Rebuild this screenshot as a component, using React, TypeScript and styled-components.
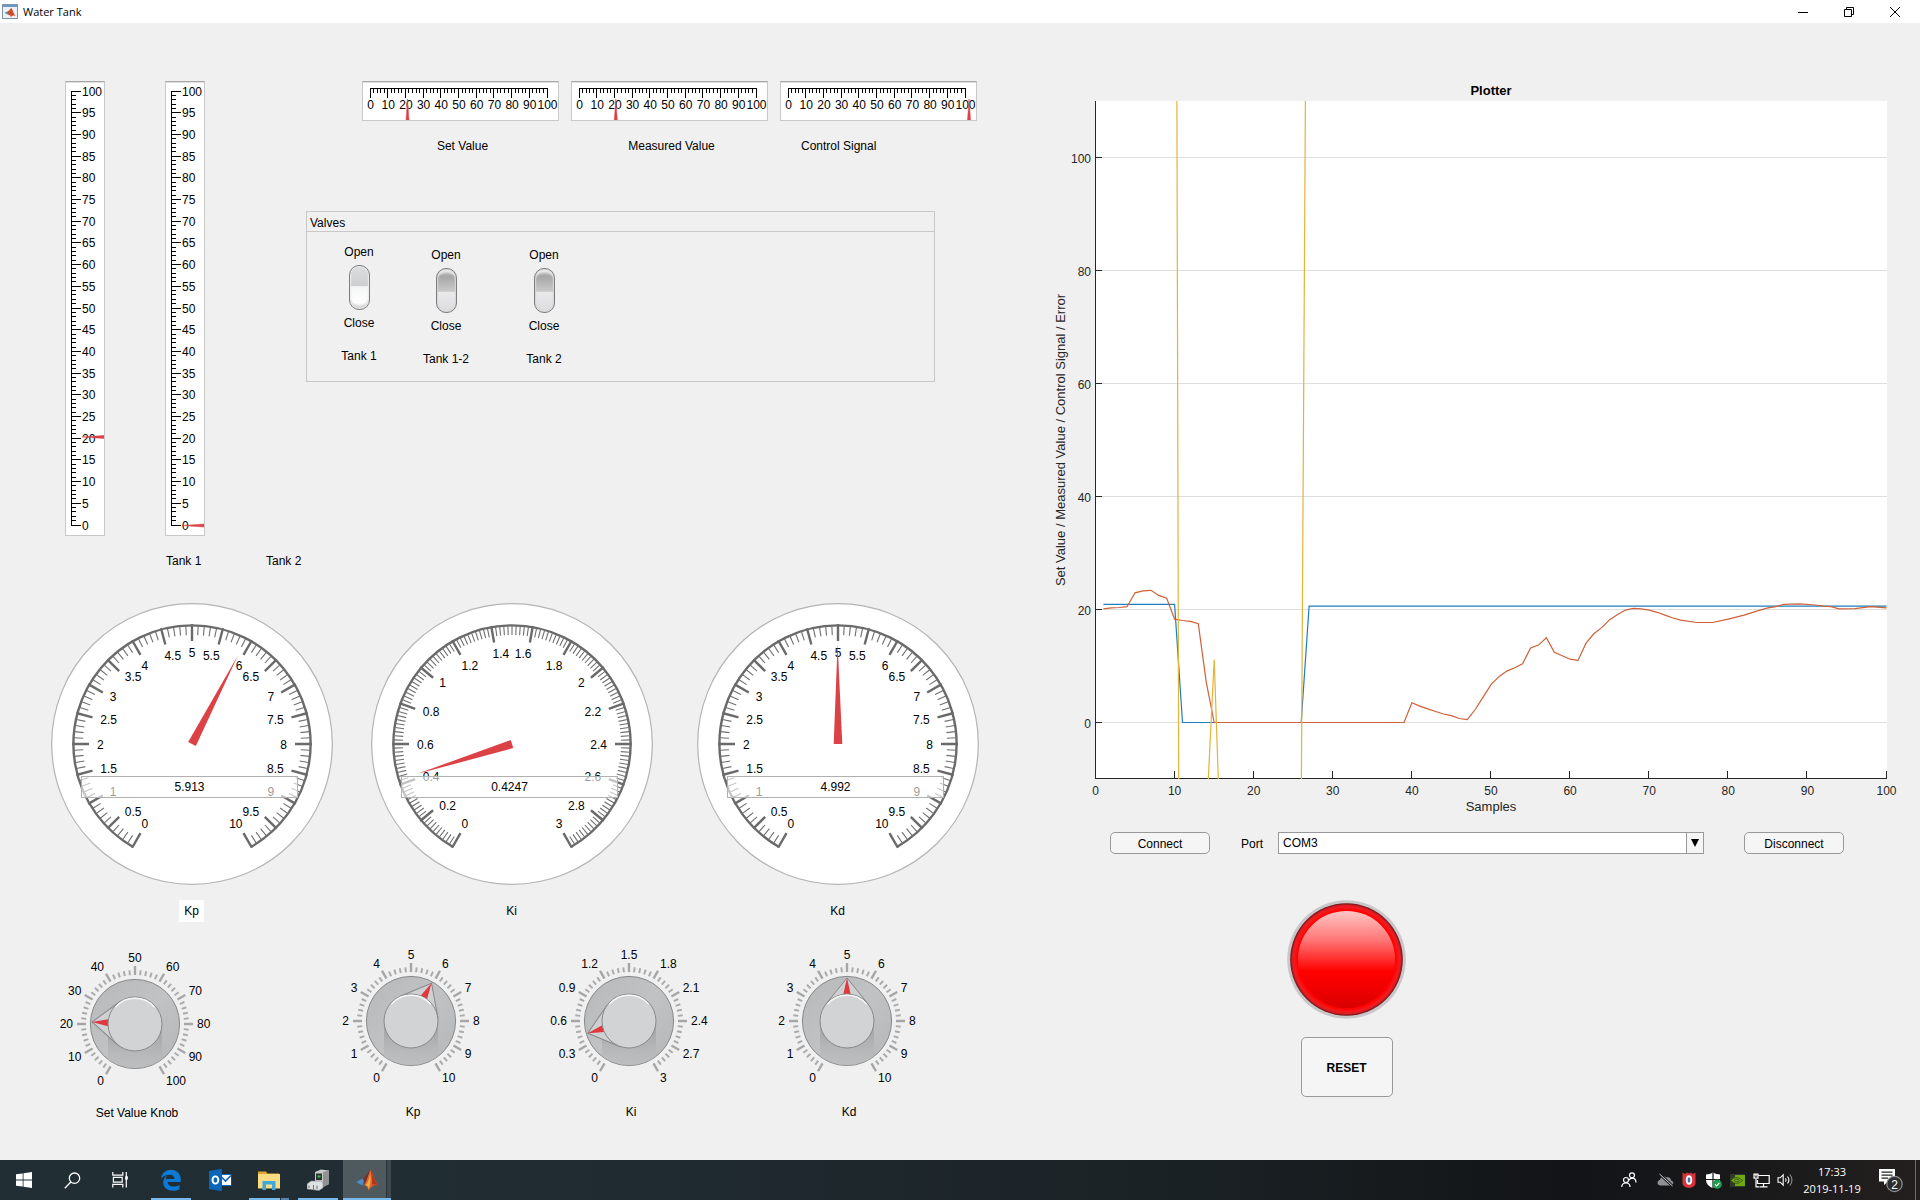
import React from "react";
import styled, { createGlobalStyle, css } from "styled-components";

const UI_FONT = '"Liberation Sans", Arial, sans-serif';
const SHELL_FONT = '"Open Sans", "Noto Sans", sans-serif';

const GlobalStyle = createGlobalStyle`
  *, *::before, *::after { box-sizing: border-box; }
  body { margin: 0; background: #f0f0f0; font: 12px/16px ${UI_FONT}; color: #000; }
  svg { display: block; }
  button, input, select { font: inherit; color: inherit; }
  figure, p, h1, h2, fieldset { margin: 0; }
`;

/* ---------- window frame ---------- */

const Window = styled.div`
  display: flex;
  flex-direction: column;
  min-height: 100vh;
`;

const TitleBar = styled.header`
  display: flex;
  align-items: center;
  height: 23px;
  padding: 0 2px;
  gap: 5px;
  background: #fff;
`;

const Title = styled.h1`
  flex: 1;
  font: 400 11px/16px ${SHELL_FONT};
`;

const CaptionButtons = styled.div`
  display: flex;
`;

const CaptionButton = styled.button`
  display: grid;
  place-items: center;
  width: 46px;
  height: 22px;
  padding: 0;
  border: 0;
  background: none;
`;

const Workspace = styled.main`
  display: flex;
  flex: 1;
  padding-top: 58px;
`;

const Instruments = styled.section`
  flex: none;
  width: 1050px;
`;

const PlotColumn = styled.section`
  flex: 1;
  min-width: 0;
`;

/* ---------- text on gauges ---------- */

const Num = styled.text<{ $bold?: boolean; $size?: number }>`
  font-family: ${UI_FONT};
  font-size: ${(p) => p.$size ?? 12}px;
  font-weight: ${(p) => (p.$bold ? 700 : 400)};
`;

/* ---------- top row ---------- */

const TopRow = styled.div`
  display: flex;
`;

const Tanks = styled.div`
  width: 306px;
  padding-left: 65px;
`;

const TankGauges = styled.div`
  display: flex;
  gap: 60px;
`;

const TankNames = styled.div`
  display: flex;
  margin: 17px 0 0 101px;

  span { flex: none; width: 100px; }
`;

const LinearFace = styled.div`
  flex: none;
  border: 1px solid #c8c8c8;
  border-top-color: #a8a8a8;
  background: #fff;
  box-shadow: inset 0 1px 0 #e0e0e0;
`;

const Meters = styled.div`
  display: flex;
  gap: 12px;
  padding-left: 56px;
`;

const MeterName = styled.figcaption<{ $left?: boolean }>`
  margin-top: 17px;
  padding-left: 4px;
  text-align: center;
  ${(p) =>
    p.$left &&
    css`
      padding-left: 21px;
      text-align: left;
    `}
`;

const Valves = styled.section`
  width: 629px;
  height: 171px;
  margin-top: 57px;
  border: 1px solid #c8c8c8;
`;

const PanelTitle = styled.h2`
  height: 20px;
  padding: 3px 3px 0;
  border-bottom: 1px solid #c8c8c8;
  font: 400 12px/16px ${UI_FONT};
`;

const ValveList = styled.div`
  display: flex;
  padding-left: 3px;
`;

const Valve = styled.div<{ $drop?: boolean; $width: number }>`
  display: flex;
  flex-direction: column;
  align-items: center;
  width: ${(p) => p.$width}px;
  padding-top: ${(p) => (p.$drop ? 15 : 12)}px;
`;

const RockerSwitch = styled.input`
  appearance: none;
  width: 21px;
  height: 45px;
  margin: 5px 0;
  border: 1px solid #7d7d7d;
  border-radius: 10px;
  background: linear-gradient(#dcdee0, #cdcfd1 46%, #f4f5f5 48%, #fff 85%, #dcdcdc);
  box-shadow: inset 0 0 1px 1px #ededed, inset 0 -3px 2px #d4d4d4;

  &:checked {
    background: linear-gradient(#e4e4e4, #a6a6a6 16%, #c9c9c9 52%, #e9e9eb 54%, #dcdcde);
    box-shadow: inset 0 0 1px 1px #d6d6d6, inset 0 3px 2px #ececec;
  }
`;

const ValveName = styled.label`
  margin-top: 17px;
`;

/* ---------- dials ---------- */

const Dials = styled.div`
  display: grid;
  grid-template-columns: 320px 326px 281px;
  padding: 34px 0 0 51px;
`;

const DialFigure = styled.figure`
  position: relative;
  display: flex;
  flex-direction: column;
  align-items: center;
  width: 281px;
`;

const Readout = styled.input`
  position: absolute;
  top: 173px;
  left: 30px;
  width: 217px;
  height: 22px;
  padding: 0;
  border: 1px solid #b0b0b0;
  background: rgba(255, 255, 255, 0.6);
  text-align: center;
`;

const DialName = styled.figcaption<{ $lit?: boolean }>`
  margin-top: 15px;
  padding: 3px 5px;
  background: ${(p) => (p.$lit ? "#fff" : "transparent")};
`;

/* ---------- knobs ---------- */

const Knobs = styled.div`
  display: flex;
  gap: 38px;
  padding: 24px 0 0 45px;
`;

const KnobFigure = styled.div<{ $first?: boolean }>`
  position: relative;
  flex: none;
  width: 180px;
  text-align: center;
  ${(p) =>
    p.$first &&
    css`
      margin-right: 58px;
      padding-top: 3px;
    `}
`;

const KnobName = styled.label<{ $first?: boolean }>`
  display: block;
  margin-top: ${(p) => (p.$first ? 6 : 8)}px;
  padding-left: 4px;
`;

const KnobInput = styled.input`
  position: absolute;
  top: 30px;
  left: 45px;
  width: 90px;
  height: 90px;
  margin: 0;
  opacity: 0;
`;

/* ---------- right column ---------- */

const ChartSvg = styled.svg`
  width: 100%;
  height: auto;
`;

const PortRow = styled.form`
  display: flex;
  align-items: center;
  padding: 11px 76px 0 60px;
`;

const PushButton = styled.button`
  width: 100px;
  height: 22px;
  padding: 2px 0 0;
  border: 1px solid #999;
  border-radius: 5px;
  background: #f5f5f5;
`;

const PortLabel = styled.label`
  margin: 0 15px 0 31px;
  padding-top: 2px;
`;

const PortBox = styled.div`
  position: relative;
  flex: 1;
  height: 22px;
  margin-right: 40px;
`;

const PortSelect = styled.select`
  appearance: none;
  width: 100%;
  height: 22px;
  padding: 0 4px;
  border: 1px solid #999;
  border-radius: 0;
  background: #fff;
`;

const PortArrow = styled.span`
  position: absolute;
  top: 1px;
  right: 1px;
  display: grid;
  place-items: center;
  width: 17px;
  height: 20px;
  border-left: 1px solid #999;
  background: #f5f5f5;
  pointer-events: none;
`;

const StopGroup = styled.div`
  display: flex;
  flex-direction: column;
  align-items: center;
  gap: 18px;
  width: 119px;
  margin: 46px 0 40px 237px;
`;

const ResetButton = styled(PushButton)`
  width: 92px;
  height: 60px;
  font-weight: 700;
`;

/* ---------- taskbar ---------- */

const Taskbar = styled.footer`
  display: flex;
  height: 40px;
  background: linear-gradient(90deg, #212e34, #202c32 30%, #1b2226 60%, #121417 82%, #1c1b1c 94%, #241f1f);
  color: #fff;
  font: 11px/17px ${SHELL_FONT};
`;

const AppButtons = styled.nav`
  display: flex;
  flex: 1;
`;

const RunningApps = styled.div`
  display: flex;
  gap: 1px;
  margin-left: 3px;
`;

const TaskButton = styled.button<{ $state?: "open" | "stacked" | "active" }>`
  position: relative;
  display: grid;
  place-items: center;
  width: 48px;
  height: 40px;
  padding: 0;
  border: 0;
  background: ${(p) =>
    p.$state === "active" ? "linear-gradient(90deg, #4f5a5f 43px, #263238 43px, #263238 44px, #3e484d 44px)" : "none"};

  &::after {
    content: ${(p) => (p.$state ? '""' : "none")};
    position: absolute;
    bottom: 0;
    left: ${(p) => (p.$state === "active" ? 0 : 4)}px;
    right: ${(p) => (p.$state === "active" ? 0 : 4)}px;
    height: 2px;
    background: ${(p) =>
      p.$state === "stacked" ? "linear-gradient(90deg, #76b9ed 31px, #202c32 31px, #202c32 32px, #5585ab 32px)" : "#76b9ed"};
  }
`;

const Tray = styled.div`
  display: flex;
  align-items: center;
`;

const TrayButton = styled.button<{ $wide?: boolean }>`
  display: grid;
  place-items: center;
  width: ${(p) => (p.$wide ? 48 : 24)}px;
  height: 40px;
  padding: 0;
  border: 0;
  background: none;
`;

const Clock = styled.time`
  width: 70px;
  text-align: center;
`;

const ShowDesktop = styled.button`
  width: 5px;
  height: 40px;
  padding: 0;
  border: 0;
  border-left: 1px solid #6b6b6b;
  background: none;
`;

/* ---------- gauges ---------- */

const range = (n: number) => Array.from({ length: n }, (_, i) => i);

function TankGauge({ value }: { value: number }) {
  const y = (v: number) => 443.5 - v * 4.34;
  const ticks = range(101)
    .map((v) => `M5.5 ${Math.round(y(v)) - 0.5}H${v % 5 === 0 ? 15 : 10}`)
    .join("");
  return (
    <LinearFace>
      <svg width="38" height="453" role="img" aria-label={`Level ${value}`}>
        <path d={`M5.5 ${Math.round(y(100)) - 1}V${Math.round(y(0))}${ticks}`} stroke="#000" fill="none" />
        {range(21).map((i) => (
          <Num key={i} x="16" y={y(i * 5) + 4}>
            {i * 5}
          </Num>
        ))}
        <path d={`M16 ${y(value)}L38 ${y(value) - 1.5}V${y(value) + 1.5}Z`} fill="#dc4146" stroke="#dc4146" strokeWidth="0.5" />
      </svg>
    </LinearFace>
  );
}

function Meter({ value, name, left }: { value: number; name: string; left?: boolean }) {
  const x = (v: number) => 7.5 + v * 1.77;
  const ticks = range(51)
    .map((i) => `M${Math.round(x(i * 2)) - 0.5} 6V${i % 5 === 0 ? 16 : 11}`)
    .join("");
  return (
    <figure>
      <LinearFace>
        <svg width="195" height="38" role="img" aria-label={`${name} ${value}`}>
          <path d={`M7 6.5H185${ticks}`} stroke="#000" fill="none" />
          {range(11).map((i) => (
            <Num key={i} x={x(i * 10)} y="27" textAnchor="middle">
              {i * 10}
            </Num>
          ))}
          <path d={`M${x(value)} 17L${x(value) - 1.5} 38H${x(value) + 1.5}Z`} fill="#dc4146" stroke="#dc4146" strokeWidth="0.5" />
        </svg>
      </LinearFace>
      <MeterName $left={left}>{name}</MeterName>
    </figure>
  );
}

const polar = (r: number, deg: number): [number, number] => [
  r * Math.sin((deg * Math.PI) / 180),
  -r * Math.cos((deg * Math.PI) / 180),
];

const spokes = (count: number, every: number, pick: "major" | "minor", from: number, to: number) =>
  range(count + 1)
    .filter((i) => (i % every === 0) === (pick === "major"))
    .map((i) => {
      const a = -150 + (300 * i) / count;
      return `M${polar(from, a)}L${polar(to, a)}`;
    })
    .join("");

interface ScaleProps {
  name: string;
  value: number;
  max: number;
  step: number;
}

function Dial({ name, value, max, step, minors, lit }: ScaleProps & { minors: number; lit?: boolean }) {
  const majors = Math.round(max / step);
  const needle = -150 + (300 * value) / max;
  return (
    <DialFigure>
      <svg width="282" height="282" viewBox="-141 -141 282 282" aria-hidden="true">
        <circle r="140.3" fill="#fff" stroke="#b4b4b4" strokeWidth="1.2" />
        <path d={`M${polar(118.6, -150)}A118.6 118.6 0 1 1 ${polar(118.6, 150)}`} fill="none" stroke="#6a6a6a" strokeWidth="2.4" />
        <path d={spokes(majors * minors, minors, "minor", 109, 118)} stroke="#6f6f6f" strokeWidth="1.1" />
        <path d={spokes(majors, 1, "major", 103, 119.8)} stroke="#6a6a6a" strokeWidth="2.4" />
        {range(majors + 1).map((i) => {
          // Labels near the top and bottom are pulled inwards and spread sideways.
          const [px, py] = polar(95, -150 + (300 * i) / majors);
          const centred = Math.abs(px) < 1;
          const steep = Math.abs(py) > 75;
          const x = px + (steep && !centred ? 3 * Math.sign(px) : 0);
          const baseline = steep ? (py < 0 ? 8 : 2) : 4.5;
          return (
            <Num key={i} x={x} y={py + baseline} textAnchor={centred ? "middle" : px < 0 ? "start" : "end"}>
              {Number((i * step).toFixed(1))}
            </Num>
          );
        })}
        <path d="M-4.3 0H4.3L0 -100Z" fill="#dc4146" transform={`rotate(${needle})`} />
      </svg>
      <Readout readOnly value={value} aria-label={`${name} value`} />
      <DialName $lit={lit}>{name}</DialName>
    </DialFigure>
  );
}

function Knob({ id, name, value, max, step, first }: ScaleProps & { id: string; first?: boolean }) {
  const majors = Math.round(max / step);
  const angle = -150 + (300 * value) / max;
  return (
    <KnobFigure $first={first}>
      <svg width="180" height="150" viewBox="-90 -75 180 150" aria-hidden="true">
        <defs>
          <linearGradient id={`${id}-body`} x1="0" y1="0" x2="1" y2="1">
            <stop offset="0" stopColor="#b6b8ba" />
            <stop offset="0.5" stopColor="#c1c2c4" />
            <stop offset="1" stopColor="#b4b6b8" />
          </linearGradient>
          <linearGradient id={`${id}-shade`} x1="0" y1="0" x2="0" y2="1">
            <stop offset="0.3" stopColor="#a9abad" />
            <stop offset="0.95" stopColor="#bcbec0" stopOpacity="0.5" />
          </linearGradient>
          <clipPath id={`${id}-clip`}>
            <circle r="44.5" />
          </clipPath>
        </defs>
        <path d={spokes(majors * 5, 5, "minor", 49, 54)} stroke="#ababab" strokeWidth="2" />
        <path d={spokes(majors, 1, "major", 49, 58)} stroke="#a6a6a6" strokeWidth="2.4" />
        <circle r="44.6" fill={`url(#${id}-body)`} stroke="#868889" strokeWidth="1" />
        <rect x="-27" y="0" width="54" height="45" fill={`url(#${id}-shade)`} clipPath={`url(#${id}-clip)`} />
        <g transform={`rotate(${angle})`}>
          <path d="M0 -43L-21.5 -16.5H21.5Z" fill="#cfd0d2" stroke="#868889" strokeWidth="1" />
          <path d="M0 -43L-3.6 -27H3.6Z" fill="#e0383d" />
        </g>
        <circle r="27" fill="#d1d3d4" stroke="#868889" />
        <path d={`M${polar(25.8, -50)}A25.8 25.8 0 0 1 ${polar(25.8, 50)}`} fill="none" stroke="#f6f6f6" strokeWidth="1.4" />
        {range(majors + 1).map((i) => {
          const a = -150 + (300 * i) / majors;
          const [px] = polar(62, a);
          const [, py] = polar(66, a);
          const centred = Math.abs(px) < 1;
          return (
            <Num key={i} x={px} y={py + 4} textAnchor={centred ? "middle" : px < 0 ? "end" : "start"}>
              {Number((i * step).toFixed(1))}
            </Num>
          );
        })}
      </svg>
      <KnobInput id={id} type="range" min={0} max={max} step={max / 1000} defaultValue={value} />
      <KnobName htmlFor={id} $first={first}>
        {name}
      </KnobName>
    </KnobFigure>
  );
}

/* ---------- plot ---------- */

type Point = [number, number];

const SET_VALUE: Point[] = [[1, 20.9], [10, 20.9], [11, 0], [26, 0], [27, 20.6], [100, 20.6]];

const MEASURED: Point[] = [
  [1, 20.1], [2, 20.3], [3, 20.35], [4, 20.5], [5, 22.95], [6, 23.3], [7, 23.4], [8, 22.5], [9, 22], [10, 18.3],
  [11, 18.05], [12, 17.9], [13, 17.5], [14, 7.2], [15, 0], [39, 0], [40, 3.5], [41, 2.9], [42, 2.4], [43, 1.95],
  [44, 1.5], [45, 1.2], [46, 0.7], [47, 0.5], [48, 2.3], [49, 4.5], [50, 6.7], [51, 8.1], [52, 9.1], [53, 9.7],
  [54, 10.4], [55, 13.2], [56, 13.7], [57, 15], [58, 12.4], [59, 11.8], [60, 11.2], [61, 11], [62, 14], [63, 15.7],
  [64, 16.8], [65, 18.2], [66, 19.1], [67, 19.9], [68, 20.2], [69, 20.1], [70, 19.9], [71, 19.5], [72, 19],
  [73, 18.5], [74, 18.1], [76, 17.7], [78, 17.7], [80, 18.3], [82, 19], [84, 19.9], [85, 20.3], [86, 20.5],
  [87, 20.9], [89, 21], [91, 20.8], [92, 20.6], [93, 20.5], [94, 20.1], [96, 20.15], [98, 20.5], [100, 20.3],
];

const CONTROL: Point[][] = [
  [[10.29, 110], [10.52, -10]],
  [[14.26, -10], [15, 11.15], [15.53, -10]],
  [[26.03, -10], [26.53, 110]],
];

const px = (v: number) => 45.5 + v * 7.91;
const py = (v: number) => 641.5 - v * 5.65;
const line = (pts: Point[]) => pts.map(([x, y]) => `${px(x).toFixed(1)},${py(y).toFixed(1)}`).join(" ");

function Plotter() {
  return (
    <ChartSvg viewBox="0 0 870 740" role="img" aria-label="Plotter">
      <rect x="45" y="20" width="792" height="678" fill="#fff" />
      <path d={range(6).map((i) => `M46 ${py(i * 20)}H837`).join("")} stroke="#dfdfdf" />
      <path
        d={`M45.5 20V697.5H837${range(11).map((i) => `M${Math.round(px(i * 10)) - 0.5} 698v-8`).join("")}${range(6)
          .map((i) => `M45 ${py(i * 20)}h7`)
          .join("")}`}
        fill="none"
        stroke="#262626"
      />
      <g fill="none">
        <polyline points={line(SET_VALUE)} stroke="#1f7fbd" strokeWidth="1.2" />
        <polyline points={line(MEASURED)} stroke="#cf6038" strokeWidth="1.2" />
        {CONTROL.map((c, i) => (
          <polyline key={i} points={line(c)} stroke="#e3b43a" strokeWidth="1.2" />
        ))}
      </g>
      <g fill="#262626">
        {range(6).map((i) => (
          <Num key={i} x="41" y={py(i * 20) + 5} textAnchor="end">
            {i * 20}
          </Num>
        ))}
        {range(11).map((i) => (
          <Num key={i} x={px(i * 10)} y="714" textAnchor="middle">
            {i * 10}
          </Num>
        ))}
        <Num x="441" y="730" textAnchor="middle" $size={13}>
          Samples
        </Num>
        <Num transform="translate(15 359) rotate(-90)" textAnchor="middle" $size={13}>
          Set Value / Measured Value / Control Signal / Error
        </Num>
      </g>
      <Num x="441" y="14" textAnchor="middle" $bold $size={13}>
        Plotter
      </Num>
    </ChartSvg>
  );
}

function Lamp() {
  return (
    <svg width="119" height="119" viewBox="-59.5 -59.5 119 119" role="img" aria-label="Stopped">
      <defs>
        <radialGradient id="lamp-rim">
          <stop offset="0.87" stopColor="#f00" />
          <stop offset="0.93" stopColor="#f5181c" />
          <stop offset="0.96" stopColor="#d82024" />
          <stop offset="1" stopColor="#6e1216" />
        </radialGradient>
        <linearGradient id="lamp-glass" x1="0" y1="0" x2="0" y2="1">
          <stop offset="0" stopColor="#ffc6c6" />
          <stop offset="0.3" stopColor="#ff7676" />
          <stop offset="0.62" stopColor="#f00" />
          <stop offset="0.8" stopColor="#f00000" />
          <stop offset="1" stopColor="#d80000" />
        </linearGradient>
      </defs>
      <circle r="59.3" fill="#c8c8cb" />
      <circle r="56.3" fill="url(#lamp-rim)" />
      <circle r="48.6" fill="url(#lamp-glass)" />
    </svg>
  );
}

/* ---------- icons ---------- */

function MatlabMark({ size }: { size: number }) {
  return (
    <svg width={size} height={size} viewBox="0 0 24 24">
      <path d="M1 14L8 10.5L11.5 13L8.5 17.5L5.5 16.5Z" fill="#4a8fc7" />
      <path d="M8 10.5C11 9 12 4.5 15.5 2L11.5 13L8.5 17.5C8 16 9.5 13 8 10.5Z" fill="#7a2f2a" />
      <path d="M15.5 2C17.5 4 20 13 23.5 18.5C20 15.5 17.5 17 13.5 22.5C13 19 11 16.5 8.5 17.5C12 14.5 13 6 15.5 2Z" fill="#e0662a" />
      <path d="M15.5 2C17.5 4 20 13 23.5 18.5C20.5 16 18.5 15.5 17 17C17.5 12 16.5 6 15.5 2Z" fill="#b3371c" />
      <path d="M15.3 5C14.5 10 13 14.5 10.5 17.3C12.5 17.5 13.4 19.5 13.8 21C15.8 16 16 10 15.3 5Z" fill="#f5a742" />
    </svg>
  );
}

function WindowIcon() {
  return (
    <svg width="16" height="15" viewBox="0 0 16 15">
      <rect x="0.5" y="0.5" width="15" height="14" fill="#eef1f4" stroke="#7d93aa" />
      <rect x="1" y="1" width="14" height="2" fill="#6f97c4" />
      <path d="M2.5 8.8L6 7.2L7.5 8.5L6 10.8Z" fill="#4a8fc7" />
      <path d="M6 7.2C7.5 6.5 8 4.8 9.3 4C10.5 5 11.5 9.5 13.5 12C11.5 10.8 10 11.5 8.8 13C8.4 11.5 7.5 10.6 6 10.8Z" fill="#c9502a" />
    </svg>
  );
}

const StartIcon = () => (
  <svg width="16" height="16" viewBox="0 0 16 16" fill="#fff">
    <path d="M0 2.3L6.7 1.4V7.6H0ZM7.5 1.3L16 0V7.6H7.5ZM0 8.4H6.7V14.6L0 13.7ZM7.5 8.4H16V16L7.5 14.8Z" />
  </svg>
);

const SearchIcon = () => (
  <svg width="17" height="17" viewBox="0 0 17 17" fill="none" stroke="#fff" strokeWidth="1.3">
    <circle cx="10.5" cy="6.2" r="5.2" />
    <path d="M6.8 10L0.8 16.2" />
  </svg>
);

const TaskViewIcon = () => (
  <svg width="17" height="16" viewBox="0 0 17 16" fill="none" stroke="#fff" strokeWidth="1.2">
    <path d="M0.8 0V3.2H10.8V0M0.8 15.5V12.4H10.8V15.5M1.4 5.4H10.2V10.2H1.4ZM14.3 0V15.5" />
    <rect x="13.2" y="4.2" width="2.6" height="3.4" fill="#fff" stroke="none" />
  </svg>
);

const EdgeIcon = () => (
  <svg width="22" height="22" viewBox="0 0 22 22">
    <path
      d="M1 9.6C2 3.6 6 .8 11 .8c6 0 9.8 4.2 9.8 10v2.3H7.6c.2 3 2.7 4.5 5.8 4.5 2.3 0 4.3-.6 6.1-1.7v4.3c-2 1.1-4.3 1.6-6.9 1.6C6.8 21.8 3.2 18.3 3.2 13.6c0-3.2 1.7-6 4.8-7.5-1.3 1-2 2.4-2.2 4h8.6c0-2.8-1.4-4.4-4.5-4.4C6.2 5.7 3 7.3 1 9.6Z"
      fill="#0a7ad6"
    />
  </svg>
);

const OutlookIcon = () => (
  <svg width="24" height="24" viewBox="0 0 24 24">
    <rect x="13" y="6" width="10.5" height="12" fill="#0a66b8" />
    <rect x="13" y="7" width="10" height="10" fill="#fff" />
    <path d="M13 8.5L17.5 13L23 7.5" fill="none" stroke="#0a66b8" strokeWidth="1.6" />
    <path d="M1 3L14 .8V23.2L1 21Z" fill="#0a66b8" />
    <ellipse cx="7.4" cy="12" rx="2.9" ry="3.6" fill="none" stroke="#fff" strokeWidth="1.9" />
  </svg>
);

const FolderIcon = () => (
  <svg width="22" height="20" viewBox="0 0 22 20">
    <path d="M0 1.5H8L9.5 3.5H21V6H0Z" fill="#e0a92e" />
    <path d="M0 4H22V18.5H0Z" fill="#fbdc82" />
    <path d="M4.5 11H17.5V20H14V14.5H8V20H4.5Z" fill="#3fa9dc" />
  </svg>
);

const DeviceIcon = () => (
  <svg width="22" height="22" viewBox="0 0 22 22">
    <path d="M8 3L14 0.5L22 1.5V15L14 19L8 17Z" fill="#c9cbcc" />
    <path d="M16 3L22 1.5V15L16 18Z" fill="#909395" />
    <rect x="9" y="4.5" width="6" height="6.5" fill="#2c3330" />
    <path d="M10.5 7.5H13.5" stroke="#2fbf4d" strokeWidth="2" />
    <path d="M0 15L4 12H14L16 14V19L12 21.5L0 20Z" fill="#dfe1e2" stroke="#808384" strokeWidth="0.6" />
    <path d="M2 16.5V19M6.5 16V20.5M10 16.5V20" stroke="#6f7273" />
  </svg>
);

const PeopleIcon = () => (
  <svg width="16" height="16" viewBox="0 0 16 16" fill="none" stroke="#fff" strokeWidth="1.2">
    <circle cx="11" cy="3.3" r="2.5" />
    <circle cx="5" cy="8" r="2.5" />
    <path d="M.8 15C.8 12.5 2.5 11 5 11S9 12.5 9 15M8 8.2C8.8 6.8 9.8 6.2 11 6.2C13.5 6.2 15 7.8 15 10.5" />
  </svg>
);

const CloudIcon = () => (
  <svg width="17" height="14" viewBox="0 0 17 14">
    <path d="M3.5 12.5C-.5 12-.3 7.5 3 7C3.2 4 7 2.5 9.5 4.5C12 3.5 14 5.5 14 7.5C17 8 17 12.5 14 12.5Z" fill="#8f9294" />
    <path d="M2.5 1L15.5 13" stroke="#17191b" strokeWidth="2.6" />
    <path d="M2.5 1L15.5 13" stroke="#d0d0d0" />
  </svg>
);

const AntivirusIcon = () => (
  <svg width="14" height="16" viewBox="0 0 14 16">
    <path d="M.5 .5L3 2L5 .5L7 1.5L9 .5L11 2L13.5 .5V11C13.5 14 10.5 15.5 7 16C3.5 15.5 .5 14 .5 11Z" fill="#d8323a" />
    <ellipse cx="7" cy="8" rx="3.2" ry="4.8" fill="#fff" />
    <ellipse cx="7" cy="8" rx="1.4" ry="2.8" fill="#3a78b5" />
  </svg>
);

const DefenderIcon = () => (
  <svg width="17" height="17" viewBox="0 0 17 17">
    <path d="M8 .5C10 1.8 12.5 2.5 15 2.5V7.5C15 12 12 14.5 8 16C4 14.5 1 12 1 7.5V2.5C3.5 2.5 6 1.8 8 .5Z" fill="#fff" />
    <path d="M8 .5V16M1 7.5H15" stroke="#15181a" strokeWidth="1.2" />
    <circle cx="12.2" cy="12.2" r="4.6" fill="#1e9e50" />
    <path d="M10 12.3L11.6 13.9L14.4 10.8" fill="none" stroke="#fff" strokeWidth="1.1" />
  </svg>
);

const NvidiaIcon = () => (
  <svg width="15" height="13" viewBox="0 0 15 13">
    <rect width="15" height="13" fill="#2f3a28" />
    <path d="M5 1H15V12H5Z" fill="#6fa812" />
    <path d="M1 6.5C3 3 8 2.3 12.5 6.5C8.5 10.5 3.5 10 1 6.5Z" fill="#6fa812" stroke="#35501a" strokeWidth="0.8" />
    <path d="M4 6.5C5.5 4.7 8 4.7 9.5 6.5C8 8.3 5.5 8.3 4 6.5Z" fill="none" stroke="#35501a" strokeWidth="0.8" />
  </svg>
);

const NetworkIcon = () => (
  <svg width="17" height="15" viewBox="0 0 17 15" fill="none" stroke="#fff" strokeWidth="1.2">
    <path d="M5 2.5H16.2V10.5H4.5V7M10.5 10.5V13.5M6.5 13.8H14.5M3 6V13.8H6" />
    <path d="M1 1.2H5V5.2H1Z" />
    <path d="M2.3 1V3.5M3.7 1V3.5" strokeWidth=".8" />
  </svg>
);

const VolumeIcon = () => (
  <svg width="17" height="14" viewBox="0 0 17 14" fill="none" stroke="#fff" strokeWidth="1.1">
    <path d="M1 4.8H3.2L6.2 1.8V12.2L3.2 9.2H1Z" />
    <path d="M8.5 5.2C9.3 6.3 9.3 7.7 8.5 8.8M10.5 3.5C12.2 5.6 12.2 8.4 10.5 10.5" />
    <path d="M12.8 1.5C15.7 4.7 15.7 9.3 12.8 12.5" stroke="#8f8f8f" />
  </svg>
);

const NoticeIcon = () => (
  <svg width="26" height="26" viewBox="0 0 26 26">
    <path d="M1 2H17V14.5H10L6 18V14.5H1Z" fill="#fff" />
    <path d="M3.5 5.2H14.5M3.5 8.2H14.5M3.5 11.2H10" stroke="#222" strokeWidth="1.2" />
    <circle cx="16.5" cy="17" r="7.7" fill="#2d2d2f" stroke="#8f8f8f" strokeWidth="1.2" />
    <Num x="16.5" y="21.5" textAnchor="middle" fill="#fff">
      2
    </Num>
  </svg>
);

/* ---------- page ---------- */

const VALVES = [
  { id: "valve-1", name: "Tank 1", on: false, width: 98 },
  { id: "valve-12", name: "Tank 1-2", on: true, width: 76 },
  { id: "valve-2", name: "Tank 2", on: true, width: 120 },
];

export default function App() {
  return (
    <Window>
      <GlobalStyle />
      <TitleBar>
        <WindowIcon />
        <Title>Water Tank</Title>
        <CaptionButtons>
          <CaptionButton aria-label="Minimize">
            <svg width="10" height="10" stroke="#000">
              <path d="M0 5.5H10" />
            </svg>
          </CaptionButton>
          <CaptionButton aria-label="Restore">
            <svg width="10" height="10" stroke="#000" fill="none">
              <path d="M.5 2.5H7.5V9.5H.5ZM2.5 2.5V.5H9.5V7.5H7.5" />
            </svg>
          </CaptionButton>
          <CaptionButton aria-label="Close">
            <svg width="10" height="10" stroke="#000">
              <path d="M0 0L10 10M10 0L0 10" />
            </svg>
          </CaptionButton>
        </CaptionButtons>
      </TitleBar>

      <Workspace>
        <Instruments>
          <TopRow>
            <Tanks>
              <TankGauges>
                <TankGauge value={20.4} />
                <TankGauge value={0} />
              </TankGauges>
              <TankNames>
                <span>Tank 1</span>
                <span>Tank 2</span>
              </TankNames>
            </Tanks>
            <div>
              <Meters>
                <Meter name="Set Value" value={20.9} />
                <Meter name="Measured Value" value={20.5} />
                <Meter name="Control Signal" value={102} left />
              </Meters>
              <Valves>
                <PanelTitle>Valves</PanelTitle>
                <ValveList>
                  {VALVES.map((v) => (
                    <Valve key={v.id} $drop={v.on} $width={v.width}>
                      <span>Open</span>
                      <RockerSwitch id={v.id} type="checkbox" defaultChecked={v.on} />
                      <span>Close</span>
                      <ValveName htmlFor={v.id}>{v.name}</ValveName>
                    </Valve>
                  ))}
                </ValveList>
              </Valves>
            </div>
          </TopRow>

          <Dials>
            <Dial name="Kp" value={5.913} max={10} step={0.5} minors={5} lit />
            <Dial name="Ki" value={0.4247} max={3} step={0.2} minors={10} />
            <Dial name="Kd" value={4.992} max={10} step={0.5} minors={5} />
          </Dials>

          <Knobs>
            <Knob id="knob-set" name="Set Value Knob" value={20.9} max={100} step={10} first />
            <Knob id="knob-kp" name="Kp" value={5.95} max={10} step={1} />
            <Knob id="knob-ki" name="Ki" value={0.435} max={3} step={0.3} />
            <Knob id="knob-kd" name="Kd" value={5} max={10} step={1} />
          </Knobs>
        </Instruments>

        <PlotColumn>
          <Plotter />
          <PortRow>
            <PushButton type="button">Connect</PushButton>
            <PortLabel htmlFor="port">Port</PortLabel>
            <PortBox>
              <PortSelect id="port">
                <option>COM3</option>
              </PortSelect>
              <PortArrow>
                <svg width="8" height="8">
                  <path d="M0 0H8L4 8Z" />
                </svg>
              </PortArrow>
            </PortBox>
            <PushButton type="button">Disconnect</PushButton>
          </PortRow>
          <StopGroup>
            <Lamp />
            <ResetButton type="button">RESET</ResetButton>
          </StopGroup>
        </PlotColumn>
      </Workspace>

      <Taskbar>
        <AppButtons>
          <TaskButton aria-label="Start"><StartIcon /></TaskButton>
          <TaskButton aria-label="Search"><SearchIcon /></TaskButton>
          <TaskButton aria-label="Task view"><TaskViewIcon /></TaskButton>
          <RunningApps>
            <TaskButton $state="open" aria-label="Edge"><EdgeIcon /></TaskButton>
            <TaskButton aria-label="Outlook"><OutlookIcon /></TaskButton>
            <TaskButton $state="stacked" aria-label="Explorer"><FolderIcon /></TaskButton>
            <TaskButton $state="open" aria-label="Device"><DeviceIcon /></TaskButton>
            <TaskButton $state="active" aria-label="MATLAB"><MatlabMark size={24} /></TaskButton>
          </RunningApps>
        </AppButtons>
        <Tray>
          <TrayButton $wide aria-label="People"><PeopleIcon /></TrayButton>
          <TrayButton aria-label="OneDrive"><CloudIcon /></TrayButton>
          <TrayButton aria-label="Antivirus"><AntivirusIcon /></TrayButton>
          <TrayButton aria-label="Security"><DefenderIcon /></TrayButton>
          <TrayButton aria-label="NVIDIA"><NvidiaIcon /></TrayButton>
          <TrayButton aria-label="Network"><NetworkIcon /></TrayButton>
          <TrayButton aria-label="Volume"><VolumeIcon /></TrayButton>
          <Clock>
            17:33
            <br />
            2019-11-19
          </Clock>
          <TrayButton $wide aria-label="Notifications"><NoticeIcon /></TrayButton>
          <ShowDesktop aria-label="Show desktop" />
        </Tray>
      </Taskbar>
    </Window>
  );
}
